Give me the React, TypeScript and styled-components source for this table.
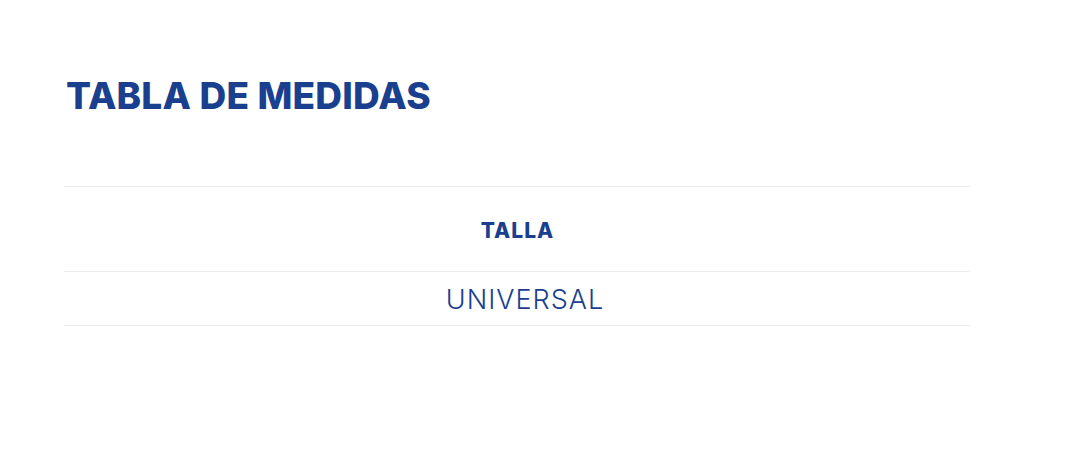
import React from "react";
import styled, { createGlobalStyle } from "styled-components";

const Global = createGlobalStyle`
  html, body { margin: 0; padding: 0; background: #ffffff; }
  body { font-family: Inter, "DejaVu Sans", sans-serif; }
`;

const Page = styled.div`
  width: 1080px;
  height: 454px;
  box-sizing: border-box;
  padding: 74px 110px 0 64px;
  background: #ffffff;
`;

const Title = styled.h2`
  margin: 0 0 0 2px;
  font-family: Inter, "DejaVu Sans", sans-serif;
  font-weight: 800;
  font-size: 37px;
  line-height: 44px;
  letter-spacing: 0.2px;
  color: #1a3f8f;
`;

const Table = styled.table`
  margin-top: 68px;
  width: 906px;
  border-collapse: collapse;
`;

const HeadCell = styled.th`
  height: 82px;
  padding: 2px 0 0 1px;
  border-top: 1px solid #ededed;
  border-bottom: 1px solid #ededed;
  text-align: center;
  vertical-align: middle;
  font-family: Inter, "DejaVu Sans", sans-serif;
  font-weight: 800;
  font-size: 21px;
  letter-spacing: 1px;
  color: #1a3f8f;
`;

const Cell = styled.td`
  height: 51px;
  padding: 2px 0 0 16px;
  border-bottom: 1px solid #ededed;
  text-align: center;
  vertical-align: middle;
  font-family: Inter, "DejaVu Sans", sans-serif;
  font-weight: 300;
  font-size: 27px;
  letter-spacing: 1px;
  color: #1a3f8f;
`;

export default function App() {
  return (
    <>
      <Global />
      <Page>
        <Title>TABLA DE MEDIDAS</Title>
        <Table>
          <thead>
            <tr>
              <HeadCell>TALLA</HeadCell>
            </tr>
          </thead>
          <tbody>
            <tr>
              <Cell>UNIVERSAL</Cell>
            </tr>
          </tbody>
        </Table>
      </Page>
    </>
  );
}
